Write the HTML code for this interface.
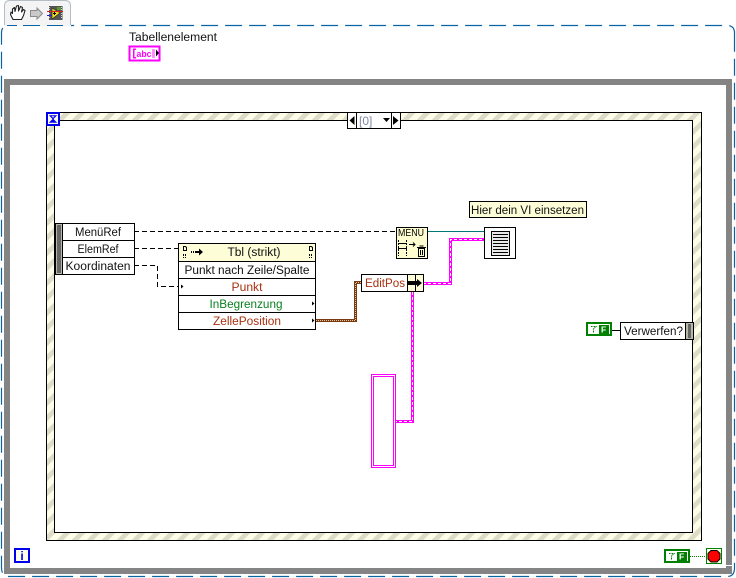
<!DOCTYPE html>
<html><head><meta charset="utf-8"><style>
html,body{margin:0;padding:0;background:#fff;width:736px;height:578px;overflow:hidden}
svg{display:block}
text{font-family:"Liberation Sans",sans-serif;font-size:11.5px}
.c{text-anchor:middle}
</style></head><body>
<svg width="736" height="578" viewBox="0 0 736 578" xmlns="http://www.w3.org/2000/svg">
<defs>
<pattern id="st" width="15" height="15" patternUnits="userSpaceOnUse">
<rect width="15" height="15" fill="#fdfde8"/>
<path d="M-4 4L4 -4M-4 19L19 -4M11 19L19 11" stroke="#dcdcc8" stroke-width="4.800"/>
</pattern>
</defs>
<!-- tab -->
<path d="M4.500 25V6Q4.500 .5 10 .5H65Q70.500 .5 70.500 6V25" fill="#f5f5f5" stroke="#b4bcc6"/>
<path d="M6 25V7Q6 2 11 2H64Q69 2 69 7V25Z" fill="#f4f4f4"/>
<!-- dashed frame -->
<path d="M734.500 40V33Q734.500 25.500 727 25.500H9Q1.500 25.500 1.500 33V568Q1.500 576.500 10 576.500H727Q734.500 576.500 734.500 568V40" fill="none" stroke="#0a64a4" stroke-width="1.200" stroke-dasharray="17 7"/>
<rect x="4" y="20" width="67" height="6.500" fill="#f4f4f4"/>
<path d="M4.500 25V20M70.500 25V20" stroke="#b4bcc6"/>
<path d="M7 25.500H17M23 25.500H40M47 25.500H63" stroke="#0a64a4" stroke-width="1"/>
<!-- hand -->
<path d="M13 19.500L10.500 14.500L11 12L12.500 13.500L12.500 9L14.500 7.500L15 11.500L16.500 6L18.500 5.500L18.500 11L20.500 6.500L22.500 7.500L21.500 12L23.500 9.500L25 10.500L23.500 15.500L21.500 19.500H15Z" fill="#fff" stroke="#222" stroke-width="1.100" stroke-linejoin="round"/>
<!-- arrow -->
<path d="M30.500 10.500H37V8L42.500 13.500L37 19V16.500H30.500Z" fill="#c9c9c9" stroke="#8a8a8a"/>
<!-- run icon -->
<rect x="49" y="6" width="13.500" height="14" fill="#555"/>
<path d="M49.500 7V19M61.500 7V19" stroke="#ccc" stroke-width="1" stroke-dasharray="1 1"/>
<path d="M52 8L60 13L52 19Z" fill="#f4dc14" stroke="#333" stroke-width=".7"/>
<path d="M57 7H61V10H57Z" fill="#5a9a30"/>
<path d="M47 11.500H63" stroke="#d02020"/><path d="M47 15.500H52" stroke="#2020d0"/>
<path d="M53 13.500H56M54.500 12V15" stroke="#000"/>
<!-- Tabellenelement -->
<text x="129" y="41" textLength="88" lengthAdjust="spacingAndGlyphs" fill="#111">Tabellenelement</text>
<rect x="129.500" y="46.500" width="30" height="14" fill="#fff" stroke="#ff00ff" stroke-width="2"/>
<g fill="#ff00ff"><path d="M133 48.500H136V50H134.500V57H136V58.500H133Z"/><text x="136.500" y="57" style="font-size:9px;font-weight:bold" textLength="15" lengthAdjust="spacingAndGlyphs">abc</text><rect x="152" y="49" width="3" height="9" fill="#ff90ff"/></g>
<path d="M156 49.500L159 53L156 56.500Z" fill="#000"/>
<!-- while loop -->
<path d="M7 82H729V571H7Z" fill="#fff" stroke="#848484" stroke-width="6"/>
<!-- case structure -->
<rect x="46.500" y="112.500" width="655" height="428" fill="url(#st)" stroke="#000"/>
<rect x="54.500" y="120.500" width="638" height="412" fill="#fff" stroke="#000"/>
<rect x="46" y="112" width="14" height="14" fill="#0000f0"/>
<rect x="48" y="114" width="10" height="10" fill="#fdfde8"/>
<path d="M49.500 115.500H56.500L53 119L56.500 122.500H49.500L53 119Z" fill="#0000f0" stroke="#0000f0" stroke-width=".6"/>
<path d="M51.500 116.300H54.500L53 117.800Z" fill="#fdfde8"/>
<!-- selector -->
<rect x="347.500" y="112.500" width="53" height="16" fill="#fff" stroke="#000"/>
<rect x="347.500" y="112.500" width="9" height="16" fill="#fff" stroke="#000"/>
<rect x="391.500" y="112.500" width="9" height="16" fill="#fff" stroke="#000"/>
<path d="M354.500 116V125L349.500 120.500Z" fill="#000"/>
<path d="M393 116V125L398.500 120.500Z" fill="#000"/>
<path d="M383 118H390L386.500 122Z" fill="#000"/>
<text x="359" y="125" fill="#8088a8" style="font-size:12px">[0]</text>
<!-- wires dashed -->
<g stroke="#000" fill="none" stroke-dasharray="5 3">
<path d="M134 231.500H396"/>
<path d="M134 248.500H178"/>
<path d="M134 265.500H157.500V286.500H178"/>
</g>
<!-- event data node -->
<rect x="55.500" y="223.500" width="79" height="51" fill="#fff" stroke="#000"/>
<rect x="56" y="224" width="6" height="50" fill="#b8b8a8"/>
<rect x="57" y="225" width="4" height="48" fill="#666"/>
<path d="M62.500 224V274" stroke="#000"/>
<path d="M63 240.500H134M63 257.500H134" stroke="#000"/>
<g fill="#111">
<text class="c" x="98" y="236" textLength="46" lengthAdjust="spacingAndGlyphs">MenüRef</text>
<text class="c" x="98" y="253" textLength="41" lengthAdjust="spacingAndGlyphs">ElemRef</text>
<text class="c" x="98" y="270" textLength="65" lengthAdjust="spacingAndGlyphs">Koordinaten</text>
</g>
<!-- property node -->
<rect x="178.500" y="243.500" width="137" height="86" fill="#fff" stroke="#000"/>
<rect x="179" y="244" width="136" height="17" fill="#fdfdd8"/>
<path d="M178 261.500H316M178 278.500H316M178 295.500H316M178 312.500H316" stroke="#000"/>
<text class="c" x="254" y="256" fill="#111" textLength="53" lengthAdjust="spacingAndGlyphs">Tbl (strikt)</text>
<g fill="none" stroke="#000"><path d="M183.500 246.500H185.500L186.500 247.500V250.500H183.500Z"/><path d="M309.500 246.500H311.500L312.500 247.500V250.500H309.500Z"/></g>
<path d="M183 254H184V256H183ZM183 257H184V258H183ZM185 254H186V256H185ZM185 257H186V258H185ZM309 254H310V256H309ZM309 257H310V258H309ZM311 254H312V256H311ZM311 257H312V258H311Z" fill="#000"/>
<path d="M191 251H192V253H191ZM193 251H194V253H193Z" fill="#000"/>
<path d="M195 251H199V248.500L203 252L199 255.500V253H195Z" fill="#000"/>
<text class="c" x="247" y="274" fill="#111" textLength="125" lengthAdjust="spacingAndGlyphs">Punkt nach Zeile/Spalte</text>
<text class="c" x="247" y="291" fill="#a83010" textLength="31" lengthAdjust="spacingAndGlyphs">Punkt</text>
<text class="c" x="246" y="308" fill="#0a8020" textLength="73" lengthAdjust="spacingAndGlyphs">InBegrenzung</text>
<text class="c" x="247" y="325" fill="#a83010" textLength="68" lengthAdjust="spacingAndGlyphs">ZellePosition</text>
<path d="M181 284.500L183.500 286.500L181 288.500ZM312 301.500L314.500 303.500L312 305.500ZM312 318.500L314.500 320.500L312 322.500Z" fill="#000"/>
<!-- brown wire -->
<path d="M316 320.500H355.500V282.500H361" fill="none" stroke="#7a3a10" stroke-width="3"/>
<path d="M316 320.500H355.500V282.500H361" fill="none" stroke="#e8c8a0" stroke-width="1" stroke-dasharray="1 1"/>
<!-- teal wire -->
<path d="M428 231.500H484" stroke="#007878"/>
<!-- pink wires -->
<g fill="none" stroke="#ff00ff" stroke-width="3">
<path d="M423 283.500H450.500V239.500H484"/>
<path d="M412.500 292V421.500H396"/>
</g>
<g fill="none" stroke="#fff" stroke-width="1" stroke-dasharray="3 2">
<path d="M423 283.500H450.500V239.500H484"/>
<path d="M412.500 292V421.500H396"/>
</g>
<!-- Menu node -->
<rect x="396.500" y="227.500" width="31" height="31" fill="#fdfdd0" stroke="#000"/>
<text x="398" y="236" fill="#000" style="font-size:10px" textLength="26" lengthAdjust="spacingAndGlyphs">MENU</text>
<path d="M398 243.500H407M398 248.500H407" stroke="#000" stroke-width="1"/>
<path d="M398.500 240V256M406.500 240V256" stroke="#000" stroke-dasharray="2 1"/>
<path d="M409 244.500H415M413 242.500L415 244.500L413 246.500" fill="none" stroke="#000"/>
<path d="M418.500 248.500H424.500V256.500H418.500ZM417 247.500H426M419.500 246H423.500M420.500 250V255M422.500 250V255" fill="none" stroke="#000"/>
<!-- VI -->
<rect x="484.500" y="227.500" width="31" height="31" fill="#fff" stroke="#000"/>
<rect x="491.500" y="231.500" width="18" height="24" fill="#e8e8e8" stroke="#000"/>
<path d="M493 234.500H508M493 237.500H508M493 240.500H508M493 243.500H508M493 246.500H508M493 249.500H508M493 252.500H508" stroke="#000"/>
<!-- label -->
<rect x="469.500" y="201.500" width="117" height="16" fill="#fdfdd8" stroke="#000"/>
<text x="471" y="214" fill="#111" textLength="113" lengthAdjust="spacingAndGlyphs">Hier dein VI einsetzen</text>
<!-- EditPos -->
<rect x="361.500" y="274.500" width="62" height="17" fill="#fff" stroke="#000"/>
<rect x="407" y="275" width="16" height="16" fill="#fdfdd8"/>
<path d="M407.500 275V292M415.500 275V292" stroke="#000"/>
<text x="365" y="287" fill="#a83010" textLength="40" lengthAdjust="spacingAndGlyphs">EditPos</text>
<path d="M408 281H417V279L422 283L417 287V285H408Z" fill="#000"/>
<!-- array constant -->
<rect x="371.500" y="374.500" width="24" height="93" fill="#fff" stroke="#ff00ff"/>
<rect x="373.500" y="376.500" width="20" height="89" fill="#fff" stroke="#ff00ff"/>
<!-- Verwerfen -->
<rect x="620.500" y="322.500" width="73" height="17" fill="#fff" stroke="#000"/>
<rect x="686" y="323" width="7" height="16" fill="#b8b8a8"/>
<rect x="688" y="324" width="3" height="14" fill="#666"/>
<path d="M685.500 323V339" stroke="#000"/>
<text x="624" y="335" fill="#111" textLength="59" lengthAdjust="spacingAndGlyphs">Verwerfen?</text>
<rect x="587" y="323" width="24" height="12" fill="#fff" stroke="#008000" stroke-width="2"/>
<rect x="599" y="325" width="10" height="9" fill="#008000"/>
<text x="601" y="332.500" fill="#fff" style="font-size:8.500px;font-weight:bold">F</text>
<path d="M591 326.500H596L593.500 329V333" fill="none" stroke="#008000" stroke-dasharray="1 .5"/>
<path d="M612 330.500H620" stroke="#000"/>
<!-- bottom terminal -->
<rect x="665" y="550" width="24" height="12" fill="#fff" stroke="#008000" stroke-width="2"/>
<rect x="677" y="552" width="10" height="9" fill="#008000"/>
<text x="679" y="559.500" fill="#fff" style="font-size:8.500px;font-weight:bold">F</text>
<path d="M669 553.500H674L671.500 556V560" fill="none" stroke="#008000" stroke-dasharray="1 .5"/>
<path d="M690 556.500H706" stroke="#008000" stroke-dasharray="1 1"/>
<rect x="706.500" y="548.500" width="15" height="15" fill="#fdfde8" stroke="#008000"/>
<path d="M711 550.500H717L720 553.500V559L717 562H711L708 559V553.500Z" fill="#ff0000" stroke="#000" stroke-width="1"/>
<!-- notch bottom-right -->
<rect x="724" y="565" width="8" height="1" fill="#fff"/>
<!-- i -->
<rect x="15" y="549" width="14" height="13" fill="#fdfde8" stroke="#0000f0" stroke-width="2"/>
<text class="c" x="22" y="560" fill="#0000f0" style="font-size:12px;font-weight:bold">i</text>
</svg>
</body></html>
